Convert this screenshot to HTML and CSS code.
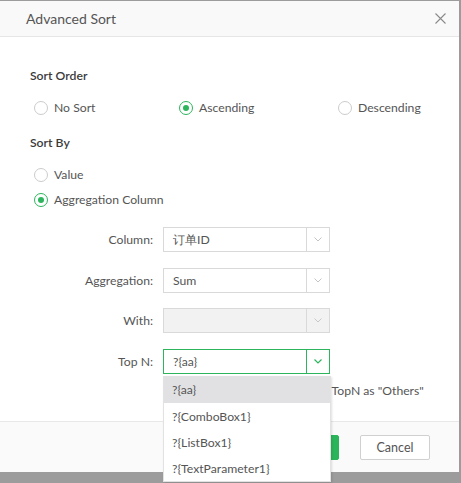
FILE: index.html
```html
<!DOCTYPE html>
<html>
<head>
<meta charset="utf-8">
<link rel="stylesheet" href="styles.css">
</head>
<body>
<div class="dialog">
  <div class="header">
    <span class="title">Advanced Sort</span>
    <span class="close"><svg width="11" height="11" viewBox="0 0 11 11"><path d="M0.5 0.5L10.5 10.5M10.5 0.5L0.5 10.5" stroke="#8a8a8a" stroke-width="1.1" fill="none"/></svg></span>
  </div>
  <div class="content">
    <div class="section-title">Sort Order</div>
    <div class="order-row">
      <label class="radio"><span class="dot"></span>No Sort</label>
      <label class="radio checked"><span class="dot"></span>Ascending</label>
      <label class="radio"><span class="dot"></span>Descending</label>
    </div>
    <div class="section-title by">Sort By</div>
    <div class="by-list">
      <label class="radio"><span class="dot"></span>Value</label>
      <label class="radio checked"><span class="dot"></span>Aggregation Column</label>
    </div>
    <div class="form">
      <span class="flabel">Column:</span>
      <div class="select"><span class="val">订单ID</span><span class="arrow"><svg width="8" height="5" viewBox="0 0 8 5"><path d="M0.5 0.5L4 4L7.5 0.5" stroke="#c4c4c4" fill="none"/></svg></span></div>
      <span class="flabel">Aggregation:</span>
      <div class="select"><span class="val">Sum</span><span class="arrow"><svg width="8" height="5" viewBox="0 0 8 5"><path d="M0.5 0.5L4 4L7.5 0.5" stroke="#c4c4c4" fill="none"/></svg></span></div>
      <span class="flabel">With:</span>
      <div class="select disabled"><span class="val"></span><span class="arrow"><svg width="8" height="5" viewBox="0 0 8 5"><path d="M0.5 0.5L4 4L7.5 0.5" stroke="#c8c8c8" fill="none"/></svg></span></div>
      <span class="flabel">Top N:</span>
      <div class="select active"><span class="val">?{aa}</span><span class="arrow"><svg width="8" height="5" viewBox="0 0 8 5"><path d="M0.5 0.5L4 4L7.5 0.5" stroke="#2db55d" stroke-width="1.2" fill="none"/></svg></span>
        <ul class="menu">
          <li class="hover">?{aa}</li>
          <li>?{ComboBox1}</li>
          <li>?{ListBox1}</li>
          <li>?{TextParameter1}</li>
        </ul>
      </div>
      <span></span>
      <label class="check"><span class="box"></span>Group the Values Outside the TopN as "Others"</label>
    </div>
  </div>
  <div class="footer">
    <button class="btn ok">OK</button>
    <button class="btn cancel">Cancel</button>
  </div>
</div>
</body>
</html>
```
FILE: styles.css
```css
* { box-sizing: border-box; }
html, body { margin: 0; padding: 0; }
body {
  background: #9c9c9c;
  font-family: "Lato", "Open Sans", sans-serif;
  font-size: 12.2px;
  color: #555;
  width: 461px;
  height: 483px;
  overflow: hidden;
}
.dialog {
  margin-top: 1px;
  width: 459px;
  height: 471px;
  background: #fff;
  display: flex;
  flex-direction: column;
  position: relative;
}
.header {
  height: 36px;
  background: #f9f9f9;
  border-bottom: 1px solid #e6e6e6;
  display: flex;
  align-items: center;
  justify-content: space-between;
  padding: 0 13px 0 26px;
}
.title { font-size: 14px; color: #555; line-height: 20px; }
.close { display: flex; width: 11px; height: 11px; }
.content {
  flex: 1;
  padding: 30px 0 0 30px;
}
.section-title {
  font-weight: 600;
  color: #3a3a3a;
  line-height: 18px;
  height: 18px;
}
.order-row {
  margin-top: 13px;
  display: grid;
  grid-template-columns: 145px 159px auto;
  padding-left: 4px;
  height: 20px;
}
.radio {
  display: flex;
  align-items: center;
  height: 20px;
  line-height: 20px;
  color: #555;
}
.radio .dot {
  width: 14px;
  height: 14px;
  border: 1px solid #cccccc;
  border-radius: 50%;
  margin-right: 6px;
  display: flex;
  align-items: center;
  justify-content: center;
  background: #fff;
}
.radio.checked .dot { border-color: #2db55d; }
.radio.checked .dot::after {
  content: "";
  width: 6px;
  height: 6px;
  border-radius: 50%;
  background: #2db55d;
}
.section-title.by { margin-top: 16px; }
.by-list {
  margin-top: 13px;
  padding-left: 4px;
  display: flex;
  flex-direction: column;
  gap: 5px;
}
.form {
  margin-top: 17px;
  display: grid;
  grid-template-columns: 123px 167px;
  column-gap: 10px;
  row-gap: 15.5px;
  align-items: center;
}
.flabel { text-align: right; color: #555; }
.select {
  position: relative;
  height: 25px;
  border: 1px solid #d9d9d9;
  background: #fff;
  display: flex;
  align-items: stretch;
}
.select .val {
  flex: 1;
  padding-left: 9px;
  line-height: 23px;
  color: #555;
}
.select .arrow {
  width: 23px;
  border-left: 1px solid #d9d9d9;
  display: flex;
  align-items: center;
  justify-content: center;
}
.select.disabled { background: #f2f2f2; }
.select.active { border-color: #2db55d; }
.select.active .arrow { border-left-color: #2db55d; }
.check {
  display: flex;
  align-items: center;
  height: 20px;
  margin-top: -9px;
  white-space: nowrap;
  color: #555;
}
.check .box {
  width: 14px;
  height: 14px;
  border: 1px solid #cfcfcf;
  margin-right: 6px;
}
.menu {
  position: absolute;
  left: -1px;
  top: 26px;
  width: 168px;
  margin: 0;
  padding: 0;
  list-style: none;
  background: #fff;
  border: 1px solid #e2e2e2;
  border-top: 0;
  box-shadow: 1px 1px 2px rgba(0,0,0,0.12);
  z-index: 5;
}
.menu li {
  height: 26px;
  line-height: 28px;
  padding-left: 8px;
  color: #555;
}
.menu li.hover { background: #e1e1e3; height: 27px; }
.footer {
  height: 51px;
  border-top: 1px solid #e8e8e8;
  background: #fafafa;
  display: flex;
  justify-content: flex-end;
  align-items: flex-start;
  padding: 13px 29px 0 0;
  gap: 21px;
}
.btn {
  width: 70px;
  height: 25px;
  font-family: inherit;
  font-size: 12.5px;
  border-radius: 2px;
  padding: 0;
}
.btn.ok { background: #2bb55b; border: 1px solid #2bb55b; color: #fff; }
.btn.cancel { background: #fff; border: 1px solid #d0d0d0; color: #555; }
```
